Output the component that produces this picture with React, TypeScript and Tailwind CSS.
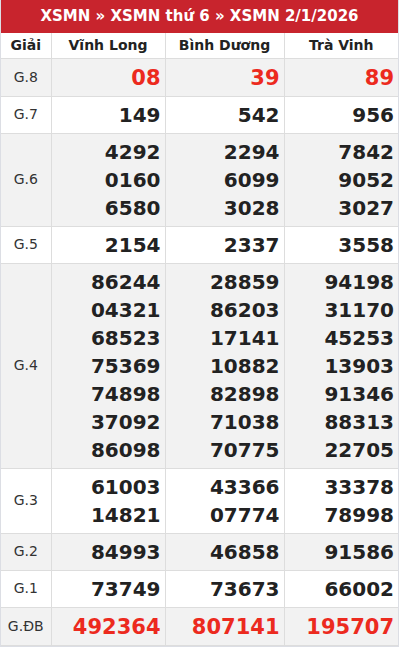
const provinces = ['Vĩnh Long', 'Bình Dương', 'Trà Vinh']

const rows: { label: string; values: string[][]; red?: boolean }[] = [
  { label: 'G.8', values: [['08'], ['39'], ['89']], red: true },
  { label: 'G.7', values: [['149'], ['542'], ['956']] },
  {
    label: 'G.6',
    values: [
      ['4292', '0160', '6580'],
      ['2294', '6099', '3028'],
      ['7842', '9052', '3027'],
    ],
  },
  { label: 'G.5', values: [['2154'], ['2337'], ['3558']] },
  {
    label: 'G.4',
    values: [
      ['86244', '04321', '68523', '75369', '74898', '37092', '86098'],
      ['28859', '86203', '17141', '10882', '82898', '71038', '70775'],
      ['94198', '31170', '45253', '13903', '91346', '88313', '22705'],
    ],
  },
  {
    label: 'G.3',
    values: [
      ['61003', '14821'],
      ['43366', '07774'],
      ['33378', '78998'],
    ],
  },
  { label: 'G.2', values: [['84993'], ['46858'], ['91586']] },
  { label: 'G.1', values: [['73749'], ['73673'], ['66002']] },
  { label: 'G.ĐB', values: [['492364'], ['807141'], ['195707']], red: true },
]

export default function App() {
  return (
    <div className="w-[400px] bg-white font-['DejaVu_Sans',sans-serif]">
      <div className="w-[399px] border-l border-r border-b-2 border-[#dcdee4]">
        <div className="h-[33px] bg-[#c8242d] flex items-center justify-center text-white font-bold text-[15px]">
          XSMN » XSMN thứ 6 » XSMN 2/1/2026
        </div>
        <table className="w-full table-fixed border-collapse">
          <colgroup>
            <col className="w-[50px]" />
            <col className="w-[114px]" />
            <col className="w-[119px]" />
            <col className="w-[114px]" />
          </colgroup>
          <thead>
            <tr className="h-[25px] border-b border-[#dddddd]">
              <th className="text-[14px] font-bold text-[#222] border-r border-[#dddddd]">Giải</th>
              {provinces.map((p, i) => (
                <th
                  key={p}
                  className={`text-[14px] font-bold text-[#222] ${i < 2 ? 'border-r border-[#dddddd]' : ''}`}
                >
                  {p}
                </th>
              ))}
            </tr>
          </thead>
          <tbody>
            {rows.map((row, idx) => (
              <tr
                key={row.label}
                className={`border-b border-[#dddddd] ${idx % 2 === 0 ? 'bg-[#f2f2f2]' : 'bg-white'}`}
              >
                <td className="text-center text-[14px] text-[#333] border-r border-[#dddddd] align-middle">
                  {row.label}
                </td>
                {row.values.map((col, ci) => (
                  <td
                    key={ci}
                    className={`text-right pr-1 ${row.red ? 'pt-[5px] pb-[4px]' : 'py-1'} ${ci < 2 ? 'border-r border-[#dddddd]' : ''}`}
                  >
                    {col.map((n) => (
                      <div
                        key={n}
                        className={`leading-[28px] font-bold ${row.red ? 'text-[21px] text-[#ec2a1e]' : 'text-[20px] text-[#222222]'}`}
                      >
                        {n}
                      </div>
                    ))}
                  </td>
                ))}
              </tr>
            ))}
          </tbody>
        </table>
      </div>
    </div>
  )
}
